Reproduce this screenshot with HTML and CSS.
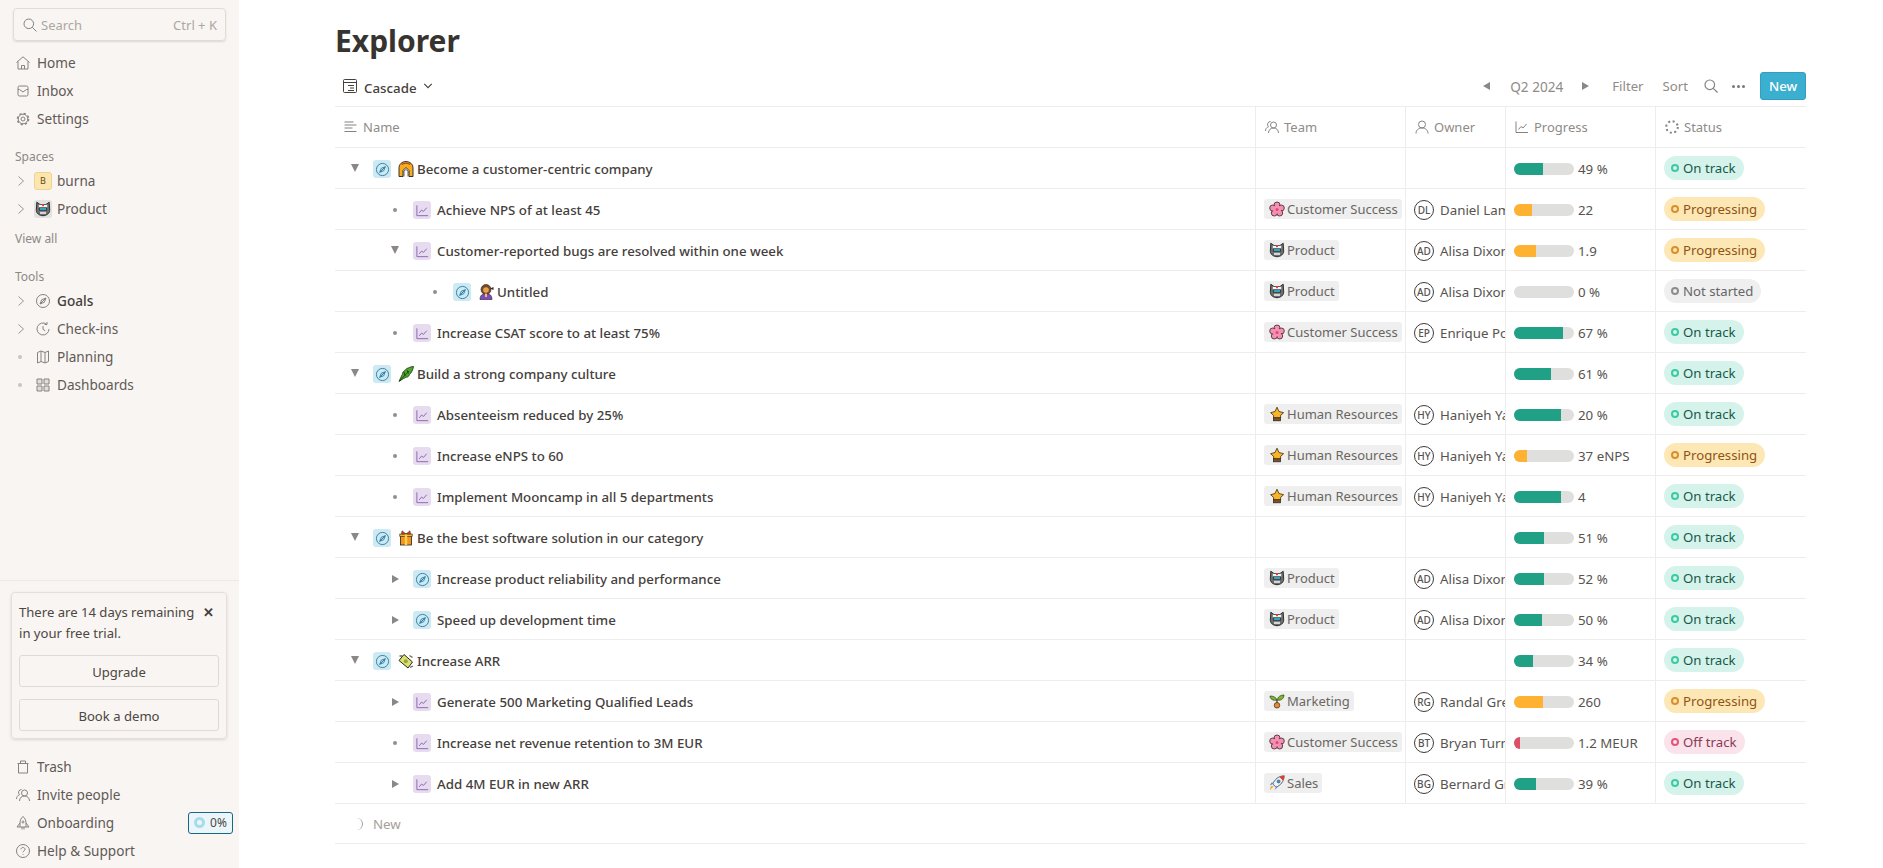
FILE: index.html
```html
<!DOCTYPE html>
<html lang="en">
<head>
    <meta charset="UTF-8">
    <meta name="viewport" content="width=device-width, initial-scale=1.0">
    <title>Explorer</title>
    <link rel="stylesheet" href="styles.css">
</head>
<body>
    <svg class="sprite" xmlns="http://www.w3.org/2000/svg">
        <!-- line icons -->
        <symbol id="i-search" viewBox="0 0 16 16"><circle cx="6.800" cy="6.800" r="4.800"/><path d="M10.300 10.300l4.200 4.200"/></symbol>
        <symbol id="i-home" viewBox="0 0 16 16"><path d="M1.500 7.500L8 1.800l6.500 5.700M3 6.500V14h10V6.500M6.500 14v-3.500h3V14"/></symbol>
        <symbol id="i-inbox" viewBox="0 0 16 16"><rect x="3" y="3" width="10" height="10" rx="1.500"/><path d="M3 6.500h1.500L8 9l3.500-2.500H13"/></symbol>
        <symbol id="i-gear" viewBox="0 0 16 16"><circle cx="8" cy="8" r="2"/><circle cx="8" cy="8" r="4.800"/><circle cx="8" cy="8" r="5.600" stroke-width="1.400" stroke-dasharray="2.200 2.200"/></symbol>
        <symbol id="i-compass" viewBox="0 0 16 16"><circle cx="8" cy="8" r="6.500"/><path d="M11 5L9.300 9.300 5 11l1.700-4.300zM11 5l-6 6"/></symbol>
        <symbol id="i-clock" viewBox="0 0 16 16"><path d="M14 8A6 6 0 1 1 11.500 3.100M12 1v2.500H9.500M8 5v3.300l2.300 1.500"/></symbol>
        <symbol id="i-map" viewBox="0 0 16 16"><path d="M2.500 3.500L6 2l4 1.500L13.500 2v10.500L10 14l-4-1.500L2.500 14zM6 2v10.500M10 3.500V14"/></symbol>
        <symbol id="i-grid" viewBox="0 0 16 16"><path d="M2 2h5v5H2zM9 2h5v5H9zM2 9h5v5H2zM9 9h5v5H9z" fill="#e2deda"/></symbol>
        <symbol id="i-trash" viewBox="0 0 16 16"><path d="M3.500 4.500h9V14h-9zM2.500 4.500h11M5.500 4.500V2h5v2.500"/></symbol>
        <symbol id="i-people" viewBox="0 0 16 16"><circle cx="9.500" cy="6" r="3"/><path d="M4.500 14c0-3 2-5 5-5s5 2 5 5M6.500 2.500a3 3 0 0 0-2 5.200C2.500 8.500 1.500 10 1.500 12"/></symbol>
        <symbol id="i-person" viewBox="0 0 16 16"><circle cx="8" cy="5.500" r="3.500"/><path d="M2 14.500c0-3.500 2.500-5.500 6-5.500s6 2 6 5.500"/></symbol>
        <symbol id="i-bell" viewBox="0 0 16 16"><path d="M8 1.500c-2 1.500-3 4-3 6.500v4h6V8c0-2.500-1-5-3-6.500zM5 8l-3 4h3M11 8l3 4h-3M7 12v2.500M9 12v2.500"/><circle cx="8" cy="7" r="1"/></symbol>
        <symbol id="i-help" viewBox="0 0 16 16"><circle cx="8" cy="8" r="6.500"/><path d="M6 6.300C6 5 7 4.500 8 4.500s2 .7 2 1.800c0 1.500-2 1.500-2 3M8 11v.8"/></symbol>
        <symbol id="i-chart" viewBox="0 0 16 16"><path d="M2 2.500V13.500h12M4.500 10.500l2.500-3 2 1.500 3.500-4"/></symbol>
        <symbol id="i-name" viewBox="0 0 16 16"><path d="M2.500 3h9M2.500 6h12M2.500 9h8M2.500 12.500h12"/></symbol>
        <symbol id="i-cascade" viewBox="0 0 16 16"><rect x="1.500" y="1.500" width="13" height="13" rx="1"/><path d="M1.500 4.500h13M6 7.500h6M8 10h4M6 12.500h6"/></symbol>
        <symbol id="i-status" viewBox="0 0 16 16"><circle cx="8" cy="8" r="5.800" stroke-width="2" stroke-dasharray="2 2.550"/></symbol>
        <symbol id="i-chevron" viewBox="0 0 8 12"><path d="M1.500 1.500L6.500 6l-5 4.500"/></symbol>
        <symbol id="i-down" viewBox="0 0 12 8"><path d="M1.500 1.500L6 6l4.500-4.500"/></symbol>

        <!-- emoji -->
        <symbol id="e-bear" viewBox="0 0 16 16">
            <path d="M1.800 1.200L5 3.500h6l3.200-2.300.5 8c0 3-3 5.500-6.700 5.500S1.300 12.200 1.300 9.200z" fill="#6e6e6e" stroke="#222" stroke-width=".9"/>
            <rect x="3.800" y="3.800" width="8.400" height="3" fill="#f4f4f4"/>
            <rect x="7" y="3" width="2" height="2.200" fill="#e8412f"/>
            <rect x="4.300" y="6.800" width="7.400" height="2.400" fill="#35bcd8" stroke="#222" stroke-width=".7"/>
            <rect x="5" y="10.800" width="6" height="2.200" fill="#d4d4d4"/>
        </symbol>
        <symbol id="e-flower" viewBox="0 0 16 16">
            <g fill="#f48fb1" stroke="#4c3540" stroke-width=".9">
                <circle cx="8" cy="4" r="3"/><circle cx="12.300" cy="7" r="3"/><circle cx="10.700" cy="12" r="3"/><circle cx="5.300" cy="12" r="3"/><circle cx="3.700" cy="7" r="3"/>
            </g>
            <circle cx="8" cy="8.500" r="4" fill="#f78fb3"/>
            <circle cx="8" cy="8.500" r="1.500" fill="#e0457f"/>
        </symbol>
        <symbol id="e-duck" viewBox="0 0 16 16">
            <path d="M8 1.200L10 5.500l4.600 1.200-3 2.700V12h-7V9.400l-3-2.700L6 5.500z" fill="#f8b526" stroke="#3d2c12" stroke-width=".8"/>
            <rect x="4.500" y="11.800" width="7" height="3" fill="#7a5330" stroke="#2b2014" stroke-width=".7"/>
        </symbol>
        <symbol id="e-arch" viewBox="0 0 16 16">
            <path d="M1 15.500V6.500a7 6 0 0 1 14 0v9h-4V9.500L8 6.500l-3 3v6z" fill="#f9ab1e" stroke="#222" stroke-width=".9"/>
            <path d="M4 3.500a5 3.500 0 0 1 8 0" fill="none" stroke="#a8481f" stroke-width="1.300"/>
            <path d="M6 15.500V10l2-1.500 2 1.500v5.500" fill="#fff" stroke="#222" stroke-width=".7"/>
        </symbol>
        <symbol id="e-woman" viewBox="0 0 16 16">
            <circle cx="8" cy="5.500" r="5" fill="#7b4a24" stroke="#222" stroke-width=".6"/>
            <circle cx="8" cy="6" r="2.800" fill="#e9a14c"/>
            <path d="M2 15.500c0-4 2.300-6 6-6s6 2 6 6z" fill="#7c4ac4" stroke="#222" stroke-width=".6"/>
            <path d="M12 4.500l3.500-1.500v3z" fill="#3a2a20"/>
            <rect x="7" y="9.500" width="2" height="3.500" fill="#f3c247"/>
        </symbol>
        <symbol id="e-leaf" viewBox="0 0 16 16">
            <path d="M15.500.5C12 .5 11 2 10 2 7 3 8 4 5.500 5.500 4 7 5 8 3.500 10L1 15.500l4.500-3c2-.5 2-1.500 4-1.500 2-1 1.500-2.500 3-3.500 1.500-2 2.500-4 3-7z" fill="#4fa52b" stroke="#17350c" stroke-width=".8"/>
            <path d="M1.500 15L11 5M6 6l1 4M9 4l1.500 3.500" fill="none" stroke="#143309" stroke-width=".8"/>
        </symbol>
        <symbol id="e-gift" viewBox="0 0 16 16">
            <rect x="2.500" y="5" width="11" height="10" fill="#f7941d" stroke="#222" stroke-width=".8"/>
            <rect x="1.800" y="4" width="12.400" height="2.500" fill="#f9b32b" stroke="#222" stroke-width=".6"/>
            <rect x="6.800" y="4" width="2.400" height="11" fill="#f8d447"/>
            <path d="M8 4L4 .8 3.500 4zM8 4l4-3.200.5 3.200z" fill="#e8402c" stroke="#222" stroke-width=".5"/>
        </symbol>
        <symbol id="e-money" viewBox="0 0 16 16">
            <path d="M6 1.500l8.500 7.500-4.500 6L1 7.500z" fill="#dbe070" stroke="#2a2a18" stroke-width="1"/>
            <circle cx="7.800" cy="8.200" r="2" fill="#9aa53c"/>
            <path d="M1.500 3h3M12 14.500l3-1.500M11.500 2.500l3 2" stroke="#666" stroke-width="1.300"/>
        </symbol>
        <symbol id="e-seed" viewBox="0 0 16 16">
            <path d="M8 7C7 4 4 3 1 3c0 3 3 5 7 4zM8.500 7c0-3 3-5 6.500-5 0 3-2.500 6-6.500 5z" fill="#7cb82f" stroke="#2b3d12" stroke-width=".7"/>
            <path d="M8 7v3" stroke="#2b3d12" stroke-width="1.200"/>
            <circle cx="8" cy="12.300" r="2.800" fill="#df8a38" stroke="#4d2c0c" stroke-width=".7"/>
        </symbol>
        <symbol id="e-rocket" viewBox="0 0 16 16">
            <path d="M15.200.8C9.500 1 5.500 4.500 3.800 9l3.200 3.200c4.500-1.700 8-5.700 8.200-11.400z" fill="#eef1f4" stroke="#39424d" stroke-width=".8"/>
            <path d="M15.200.8c-1.800.1-3.400.5-4.800 1.200l3.600 3.600c.7-1.400 1.100-3 1.200-4.800z" fill="#e2352b"/>
            <circle cx="9.600" cy="6.400" r="1.500" fill="#2f9fe0" stroke="#39424d" stroke-width=".6"/>
            <path d="M3.800 9l-3 1.500 2.300-3.500zM7 12.200l-1.500 3 3.800-4z" fill="#3d7fd1"/>
            <path d="M4.800 11.200L.8 15.200l1-4z" fill="#f7a21e"/>
        </symbol>
    </svg>

    <div class="app">
        <aside class="sidebar">
            <div class="search-box">
                <svg class="icon search-icon"><use href="#i-search"/></svg>
                <span>Search</span>
                <span class="shortcut">Ctrl + K</span>
            </div>

            <nav class="nav-top">
                <a class="nav-item"><svg class="icon"><use href="#i-home"/></svg>Home</a>
                <a class="nav-item"><svg class="icon"><use href="#i-inbox"/></svg>Inbox</a>
                <a class="nav-item"><svg class="icon"><use href="#i-gear"/></svg>Settings</a>
            </nav>

            <div class="nav-label spaces-label">Spaces</div>
            <a class="nav-item tree"><svg class="chevron"><use href="#i-chevron"/></svg><span class="letter-box">B</span>burna</a>
            <a class="nav-item tree"><svg class="chevron"><use href="#i-chevron"/></svg><span class="emoji-box"><svg class="emoji"><use href="#e-bear"/></svg></span>Product</a>
            <div class="nav-label view-all">View all</div>

            <div class="nav-label tools-label">Tools</div>
            <a class="nav-item tree active"><svg class="chevron"><use href="#i-chevron"/></svg><svg class="icon tree-icon"><use href="#i-compass"/></svg>Goals</a>
            <a class="nav-item tree"><svg class="chevron"><use href="#i-chevron"/></svg><svg class="icon tree-icon"><use href="#i-clock"/></svg>Check-ins</a>
            <a class="nav-item tree"><span class="nav-dot"></span><svg class="icon tree-icon"><use href="#i-map"/></svg>Planning</a>
            <a class="nav-item tree"><span class="nav-dot"></span><svg class="icon tree-icon"><use href="#i-grid"/></svg>Dashboards</a>

            <div class="sidebar-bottom">
                <div class="trial-card">
                    <div class="trial-text">
                        <p>There are 14 days remaining in your free trial.</p>
                        <span class="trial-close">✕</span>
                    </div>
                    <button type="button" class="trial-btn">Upgrade</button>
                    <button type="button" class="trial-btn">Book a demo</button>
                </div>
                <a class="nav-item"><svg class="icon"><use href="#i-trash"/></svg>Trash</a>
                <a class="nav-item"><svg class="icon"><use href="#i-people"/></svg>Invite people</a>
                <a class="nav-item"><svg class="icon"><use href="#i-bell"/></svg>Onboarding
                    <span class="onboarding-badge"><span class="badge-ring"></span>0%</span>
                </a>
                <a class="nav-item"><svg class="icon"><use href="#i-help"/></svg>Help &amp; Support</a>
            </div>
        </aside>

        <main class="main">
            <h1>Explorer</h1>

            <div class="toolbar">
                <div class="view-select">
                    <svg class="icon dark"><use href="#i-cascade"/></svg>
                    <span>Cascade</span>
                    <svg class="view-caret"><use href="#i-down"/></svg>
                </div>
                <div class="toolbar-right">
                    <span class="caret left"></span>
                    <span class="period">Q2 2024</span>
                    <span class="caret right"></span>
                    <span class="tool filter-tool">Filter</span>
                    <span class="tool sort-tool">Sort</span>
                    <svg class="icon search-tool"><use href="#i-search"/></svg>
                    <span class="dots"><i></i><i></i><i></i></span>
                    <button type="button" class="new-btn">New</button>
                </div>
            </div>

            <div class="table">
                <div class="row head">
                    <div class="cell name"><svg class="icon"><use href="#i-name"/></svg>Name</div>
                    <div class="cell"><svg class="icon"><use href="#i-people"/></svg>Team</div>
                    <div class="cell"><svg class="icon"><use href="#i-person"/></svg>Owner</div>
                    <div class="cell"><svg class="icon"><use href="#i-chart"/></svg>Progress</div>
                    <div class="cell last"><svg class="icon"><use href="#i-status"/></svg>Status</div>
                </div>

                <div class="row">
                    <div class="cell name"><span class="toggle"><span class="caret down"></span></span><span class="type goal"><svg><use href="#i-compass"/></svg></span><svg class="emoji title-emoji"><use href="#e-arch"/></svg>Become a customer-centric company</div>
                    <div class="cell"></div>
                    <div class="cell"></div>
                    <div class="cell"><span class="bar"><span class="fill green" style="width:48%"></span></span>49 %</div>
                    <div class="cell last"><span class="pill on-track"><i></i>On track</span></div>
                </div>
                <div class="row">
                    <div class="cell name level-1"><span class="toggle"><span class="bullet"></span></span><span class="type kr"><svg><use href="#i-chart"/></svg></span>Achieve NPS of at least 45</div>
                    <div class="cell"><span class="chip"><svg class="emoji"><use href="#e-flower"/></svg>Customer Success</span></div>
                    <div class="cell owner"><span class="avatar">DL</span>Daniel Lambert</div>
                    <div class="cell"><span class="bar"><span class="fill orange" style="width:30%"></span></span>22</div>
                    <div class="cell last"><span class="pill progressing"><i></i>Progressing</span></div>
                </div>
                <div class="row">
                    <div class="cell name level-1"><span class="toggle"><span class="caret down"></span></span><span class="type kr"><svg><use href="#i-chart"/></svg></span>Customer-reported bugs are resolved within one week</div>
                    <div class="cell"><span class="chip"><svg class="emoji"><use href="#e-bear"/></svg>Product</span></div>
                    <div class="cell owner"><span class="avatar">AD</span>Alisa Dixon</div>
                    <div class="cell"><span class="bar"><span class="fill orange" style="width:37%"></span></span>1.9</div>
                    <div class="cell last"><span class="pill progressing"><i></i>Progressing</span></div>
                </div>
                <div class="row">
                    <div class="cell name level-2"><span class="toggle"><span class="bullet"></span></span><span class="type goal"><svg><use href="#i-compass"/></svg></span><svg class="emoji title-emoji"><use href="#e-woman"/></svg>Untitled</div>
                    <div class="cell"><span class="chip"><svg class="emoji"><use href="#e-bear"/></svg>Product</span></div>
                    <div class="cell owner"><span class="avatar">AD</span>Alisa Dixon</div>
                    <div class="cell"><span class="bar"></span>0 %</div>
                    <div class="cell last"><span class="pill not-started"><i></i>Not started</span></div>
                </div>
                <div class="row">
                    <div class="cell name level-1"><span class="toggle"><span class="bullet"></span></span><span class="type kr"><svg><use href="#i-chart"/></svg></span>Increase CSAT score to at least 75%</div>
                    <div class="cell"><span class="chip"><svg class="emoji"><use href="#e-flower"/></svg>Customer Success</span></div>
                    <div class="cell owner"><span class="avatar">EP</span>Enrique Porter</div>
                    <div class="cell"><span class="bar"><span class="fill green" style="width:82%"></span></span>67 %</div>
                    <div class="cell last"><span class="pill on-track"><i></i>On track</span></div>
                </div>

                <div class="row">
                    <div class="cell name"><span class="toggle"><span class="caret down"></span></span><span class="type goal"><svg><use href="#i-compass"/></svg></span><svg class="emoji title-emoji"><use href="#e-leaf"/></svg>Build a strong company culture</div>
                    <div class="cell"></div>
                    <div class="cell"></div>
                    <div class="cell"><span class="bar"><span class="fill green" style="width:62%"></span></span>61 %</div>
                    <div class="cell last"><span class="pill on-track"><i></i>On track</span></div>
                </div>
                <div class="row">
                    <div class="cell name level-1"><span class="toggle"><span class="bullet"></span></span><span class="type kr"><svg><use href="#i-chart"/></svg></span>Absenteeism reduced by 25%</div>
                    <div class="cell"><span class="chip"><svg class="emoji"><use href="#e-duck"/></svg>Human Resources</span></div>
                    <div class="cell owner"><span class="avatar">HY</span>Haniyeh Yazdi</div>
                    <div class="cell"><span class="bar"><span class="fill green" style="width:78%"></span></span>20 %</div>
                    <div class="cell last"><span class="pill on-track"><i></i>On track</span></div>
                </div>
                <div class="row">
                    <div class="cell name level-1"><span class="toggle"><span class="bullet"></span></span><span class="type kr"><svg><use href="#i-chart"/></svg></span>Increase eNPS to 60</div>
                    <div class="cell"><span class="chip"><svg class="emoji"><use href="#e-duck"/></svg>Human Resources</span></div>
                    <div class="cell owner"><span class="avatar">HY</span>Haniyeh Yazdi</div>
                    <div class="cell"><span class="bar"><span class="fill orange" style="width:22%"></span></span>37 eNPS</div>
                    <div class="cell last"><span class="pill progressing"><i></i>Progressing</span></div>
                </div>
                <div class="row">
                    <div class="cell name level-1"><span class="toggle"><span class="bullet"></span></span><span class="type kr"><svg><use href="#i-chart"/></svg></span>Implement Mooncamp in all 5 departments</div>
                    <div class="cell"><span class="chip"><svg class="emoji"><use href="#e-duck"/></svg>Human Resources</span></div>
                    <div class="cell owner"><span class="avatar">HY</span>Haniyeh Yazdi</div>
                    <div class="cell"><span class="bar"><span class="fill green" style="width:78%"></span></span>4</div>
                    <div class="cell last"><span class="pill on-track"><i></i>On track</span></div>
                </div>

                <div class="row">
                    <div class="cell name"><span class="toggle"><span class="caret down"></span></span><span class="type goal"><svg><use href="#i-compass"/></svg></span><svg class="emoji title-emoji"><use href="#e-gift"/></svg>Be the best software solution in our category</div>
                    <div class="cell"></div>
                    <div class="cell"></div>
                    <div class="cell"><span class="bar"><span class="fill green" style="width:50%"></span></span>51 %</div>
                    <div class="cell last"><span class="pill on-track"><i></i>On track</span></div>
                </div>
                <div class="row">
                    <div class="cell name level-1"><span class="toggle"><span class="caret right"></span></span><span class="type goal"><svg><use href="#i-compass"/></svg></span>Increase product reliability and performance</div>
                    <div class="cell"><span class="chip"><svg class="emoji"><use href="#e-bear"/></svg>Product</span></div>
                    <div class="cell owner"><span class="avatar">AD</span>Alisa Dixon</div>
                    <div class="cell"><span class="bar"><span class="fill green" style="width:50%"></span></span>52 %</div>
                    <div class="cell last"><span class="pill on-track"><i></i>On track</span></div>
                </div>
                <div class="row">
                    <div class="cell name level-1"><span class="toggle"><span class="caret right"></span></span><span class="type goal"><svg><use href="#i-compass"/></svg></span>Speed up development time</div>
                    <div class="cell"><span class="chip"><svg class="emoji"><use href="#e-bear"/></svg>Product</span></div>
                    <div class="cell owner"><span class="avatar">AD</span>Alisa Dixon</div>
                    <div class="cell"><span class="bar"><span class="fill green" style="width:47%"></span></span>50 %</div>
                    <div class="cell last"><span class="pill on-track"><i></i>On track</span></div>
                </div>

                <div class="row">
                    <div class="cell name"><span class="toggle"><span class="caret down"></span></span><span class="type goal"><svg><use href="#i-compass"/></svg></span><svg class="emoji title-emoji"><use href="#e-money"/></svg>Increase ARR</div>
                    <div class="cell"></div>
                    <div class="cell"></div>
                    <div class="cell"><span class="bar"><span class="fill green" style="width:31%"></span></span>34 %</div>
                    <div class="cell last"><span class="pill on-track"><i></i>On track</span></div>
                </div>
                <div class="row">
                    <div class="cell name level-1"><span class="toggle"><span class="caret right"></span></span><span class="type kr"><svg><use href="#i-chart"/></svg></span>Generate 500 Marketing Qualified Leads</div>
                    <div class="cell"><span class="chip"><svg class="emoji"><use href="#e-seed"/></svg>Marketing</span></div>
                    <div class="cell owner"><span class="avatar">RG</span>Randal Green</div>
                    <div class="cell"><span class="bar"><span class="fill orange" style="width:48%"></span></span>260</div>
                    <div class="cell last"><span class="pill progressing"><i></i>Progressing</span></div>
                </div>
                <div class="row">
                    <div class="cell name level-1"><span class="toggle"><span class="bullet"></span></span><span class="type kr"><svg><use href="#i-chart"/></svg></span>Increase net revenue retention to 3M EUR</div>
                    <div class="cell"><span class="chip"><svg class="emoji"><use href="#e-flower"/></svg>Customer Success</span></div>
                    <div class="cell owner"><span class="avatar">BT</span>Bryan Turner</div>
                    <div class="cell"><span class="bar"><span class="fill red" style="width:10%"></span></span>1.2 MEUR</div>
                    <div class="cell last"><span class="pill off-track"><i></i>Off track</span></div>
                </div>
                <div class="row">
                    <div class="cell name level-1"><span class="toggle"><span class="caret right"></span></span><span class="type kr"><svg><use href="#i-chart"/></svg></span>Add 4M EUR in new ARR</div>
                    <div class="cell"><span class="chip"><svg class="emoji"><use href="#e-rocket"/></svg>Sales</span></div>
                    <div class="cell owner"><span class="avatar">BG</span>Bernard Gray</div>
                    <div class="cell"><span class="bar"><span class="fill green" style="width:36%"></span></span>39 %</div>
                    <div class="cell last"><span class="pill on-track"><i></i>On track</span></div>
                </div>

                <div class="new-row"><span class="spinner"></span>New</div>
            </div>
        </main>
    </div>
</body>
</html>
```

FILE: styles.css
```css
* {
    box-sizing: border-box;
}
html, body {
    height: 100%;
}
body {
    margin: 0;
    font-family: "Noto Sans", "Open Sans", sans-serif;
    font-size: 13.6px;
    color: #44403c;
    background: white;
    overflow: hidden;
}
.sprite {
    display: none;
}
.app {
    display: flex;
    height: 868px;
}

/* sidebar */
.sidebar {
    width: 239px;
    flex-shrink: 0;
    background-color: #f9f5f2;
    display: flex;
    flex-direction: column;
    padding-top: 8px;
    color: #5f5a56;
}
.icon {
    width: 16px;
    height: 16px;
    flex-shrink: 0;
    fill: none;
    stroke: #86827e;
    stroke-width: 1;
}
.search-box {
    margin: 0 13px;
    height: 33px;
    display: flex;
    align-items: center;
    padding: 0 8px;
    border: 1px solid #e1dcd8;
    border-radius: 4px;
    box-shadow: 0 1px 2px rgba(0, 0, 0, 0.12);
    color: #aca7a2;
    font-size: 13px;
}
.search-icon {
    margin-right: 3px;
}
.shortcut {
    margin-left: auto;
}
.nav-top {
    margin-top: 8px;
}
.nav-item {
    display: flex;
    align-items: center;
    height: 28px;
    padding: 0 6px 1px 15px;
    white-space: nowrap;
}
.nav-item > .icon {
    margin-right: 6px;
}
.nav-label {
    height: 20px;
    line-height: 20px;
    padding-left: 15px;
    font-size: 12px;
    color: #8d8985;
}
.spaces-label {
    margin-top: 14px;
}
.view-all {
    margin-top: 6px;
}
.tools-label {
    margin-top: 18px;
}
.chevron {
    width: 8px;
    height: 12px;
    margin: 0 9px 0 2px;
    fill: none;
    stroke: #9a9692;
    stroke-width: 1;
    flex-shrink: 0;
}
.nav-dot {
    width: 4px;
    height: 4px;
    margin: 0 12px 0 3px;
    border-radius: 50%;
    background: #c9c4bf;
    flex-shrink: 0;
}
.letter-box, .emoji-box {
    width: 18px;
    height: 18px;
    margin-right: 5px;
    border-radius: 3px;
    display: flex;
    align-items: center;
    justify-content: center;
    flex-shrink: 0;
}
.letter-box {
    background: #fde6ae;
    border: 1px solid #ecd393;
    font-size: 9px;
    color: #5c4a20;
}
.emoji-box {
    background: #e3e1df;
}
.nav-item > .tree-icon {
    margin: 0 6px 0 1px;
}
.active {
    color: #44403c;
    font-weight: 500;
}
.sidebar-bottom {
    margin-top: auto;
    border-top: 1px solid #eee9e5;
    padding: 11px 0 3px;
}
.trial-card {
    margin: 0 12px 14px 11px;
    padding: 9px 7px 7px;
    border: 1px solid #e4dfdb;
    border-radius: 4px;
    box-shadow: 0 1px 3px rgba(0, 0, 0, 0.12);
    color: #4c4742;
    font-size: 13.1px;
}
.trial-text {
    display: flex;
    align-items: flex-start;
    height: 53px;
}
.trial-text p {
    margin: 0;
    width: 178px;
    line-height: 21px;
}
.trial-close {
    margin-left: 6px;
    font-size: 13px;
    line-height: 21px;
    color: #44403c;
    font-weight: 700;
}
.trial-btn {
    display: block;
    width: 100%;
    height: 32px;
    margin-bottom: 12px;
    padding-top: 2px;
    background: transparent;
    border: 1px solid #dedad6;
    border-radius: 3px;
    font-family: inherit;
    font-size: 13.1px;
    color: #4c4742;
}
.trial-btn:last-child {
    margin-bottom: 0;
}
.onboarding-badge {
    margin-left: auto;
    width: 45px;
    height: 22px;
    display: flex;
    align-items: center;
    justify-content: center;
    gap: 5px;
    background: #ebf6fa;
    border: 1px solid #1c6584;
    border-radius: 3px;
    font-size: 12px;
    color: #4c4742;
}
.badge-ring {
    width: 11px;
    height: 11px;
    border: 3px solid #a6dcea;
    border-radius: 50%;
}

/* main */
.main {
    flex: 1;
    padding: 0 77px 0 96px;
    min-width: 0;
}
h1 {
    margin: 0;
    height: 66px;
    padding: 16px 0 0 0;
    font-size: 30px;
    line-height: 50px;
    font-weight: 700;
    color: #37332f;
}
.toolbar {
    height: 41px;
    display: flex;
    align-items: center;
    justify-content: space-between;
    border-bottom: 1px solid #eeeded;
}
.view-select {
    display: flex;
    align-items: center;
    padding-left: 7px;
    font-weight: 500;
    font-size: 13.3px;
    color: #44403c;
}
.view-select span {
    margin-left: 6px;
    padding-top: 3px;
}
.icon.dark {
    stroke: #44403c;
}
.view-caret {
    width: 10px;
    height: 8px;
    margin-left: 6px;
    fill: none;
    stroke: #44403c;
    stroke-width: 1.3;
}
.toolbar-right {
    display: flex;
    align-items: center;
    font-size: 13.2px;
    color: #8f8b87;
}
.period {
    margin: 0 19px 0 20px;
    font-size: 13.6px;
}
.filter-tool {
    margin-left: 23px;
}
.sort-tool {
    margin-left: 19px;
}
.search-tool {
    margin-left: 15px;
    stroke-width: 1.2;
}
.dots {
    display: flex;
    gap: 2px;
    margin-left: 13px;
}
.dots i {
    width: 3px;
    height: 3px;
    border-radius: 50%;
    background: #7c7874;
}
.new-btn {
    margin-left: 15px;
    width: 46px;
    height: 28px;
    background-color: #3aafd0;
    border: 1px solid #339fbe;
    border-radius: 3px;
    color: white;
    font-family: inherit;
    font-size: 13.2px;
    font-weight: 500;
}
.caret {
    display: inline-block;
    width: 0;
    height: 0;
}
.caret.left {
    border-top: 4.5px solid transparent;
    border-bottom: 4.5px solid transparent;
    border-right: 7px solid #8a8784;
}
.caret.right {
    border-top: 4.5px solid transparent;
    border-bottom: 4.5px solid transparent;
    border-left: 7px solid #8a8784;
}
.caret.down {
    border-left: 4.5px solid transparent;
    border-right: 4.5px solid transparent;
    border-top: 8px solid #8a8784;
    margin-top: -2px;
}

/* table */
.row {
    display: grid;
    grid-template-columns: 921px 150px 100px 150px 150px;
    height: 41px;
    border-bottom: 1px solid #eeeded;
}
.cell {
    display: flex;
    align-items: center;
    padding: 1px 0 0 8px;
    border-right: 1px solid #eeeded;
    font-size: 13.3px;
    color: #57534f;
    white-space: nowrap;
    overflow: hidden;
}
.cell.last {
    border-right: none;
}
.head .cell {
    padding-top: 0;
    font-size: 13px;
    color: #8f8b87;
}
.head .icon {
    margin-right: 4px;
}
.cell.name {
    padding-left: 10px;
    font-weight: 500;
    color: #44403c;
}
.head .cell.name {
    padding-left: 7px;
    font-weight: 400;
    color: #8f8b87;
}
.head .name .icon {
    margin-right: 5px;
}
.level-1 {
    padding-left: 50px !important;
}
.level-2 {
    padding-left: 90px !important;
}
.toggle {
    width: 20px;
    height: 20px;
    margin-right: 8px;
    display: flex;
    align-items: center;
    justify-content: center;
    flex-shrink: 0;
}
.bullet {
    width: 4px;
    height: 4px;
    border-radius: 50%;
    background: #8f8f8f;
}
.type {
    width: 18px;
    height: 18px;
    margin-top: 1px;
    margin-right: 6px;
    border-radius: 3px;
    display: flex;
    align-items: center;
    justify-content: center;
    flex-shrink: 0;
}
.type svg {
    width: 15px;
    height: 15px;
    fill: none;
    stroke-width: 1;
}
.type.goal {
    background: #cde9f3;
    stroke: #2d7fa0;
}
.type.kr {
    background: #e7dcef;
    stroke: #8a63b0;
}
.emoji {
    width: 16px;
    height: 16px;
    flex-shrink: 0;
}
.title-emoji {
    margin: 0 3px 0 1px;
}
.chip {
    display: inline-flex;
    align-items: center;
    height: 20px;
    padding: 0 4px 0 5px;
    margin-top: -2px;
    border-radius: 3px;
    background: #efefef;
    font-size: 13px;
    color: #6a6662;
}
.chip .emoji {
    margin-right: 2px;
}
.owner {
    color: #57534f;
}
.avatar {
    width: 20px;
    height: 20px;
    margin-top: 1px;
    margin-right: 6px;
    border: 1px solid #3f3b38;
    border-radius: 50%;
    display: flex;
    align-items: center;
    justify-content: center;
    font-size: 10px;
    font-weight: 500;
    flex-shrink: 0;
}
.bar {
    display: block;
    width: 60px;
    height: 12px;
    margin-top: 1px;
    margin-right: 4px;
    border-radius: 6px;
    background: #dfdfdd;
    overflow: hidden;
    flex-shrink: 0;
}
.fill {
    display: block;
    height: 100%;
}
.green { background: #20a185; }
.orange { background: #ffb132; }
.red { background: #dd4e68; }
.pill {
    display: inline-flex;
    align-items: center;
    height: 24px;
    padding: 0 8px 0 7px;
    margin-top: -1px;
    border-radius: 12px;
    font-size: 13.2px;
}
.pill i {
    width: 8px;
    height: 8px;
    margin-right: 4px;
    border: 2px solid;
    border-radius: 50%;
}
.on-track { background: #d5f3ea; color: #17594a; }
.on-track i { border-color: #3cc9a5; }
.progressing { background: #fde8b5; color: #8f5314; }
.progressing i { border-color: #d98f2b; }
.not-started { background: #efefef; color: #666; }
.not-started i { border-color: #8d8d8d; }
.off-track { background: #fae3ea; color: #8c3a55; }
.off-track i { border-color: #e0577a; }
.new-row {
    height: 40px;
    display: flex;
    align-items: center;
    padding-left: 38px;
    border-bottom: 1px solid #eeeded;
    color: #a3a09c;
    font-size: 13.3px;
}
.spinner {
    width: 12px;
    height: 12px;
    margin-left: -22px;
    margin-right: 10px;
    border-right: 1px solid #a3a09c;
    border-radius: 50%;
}
```
